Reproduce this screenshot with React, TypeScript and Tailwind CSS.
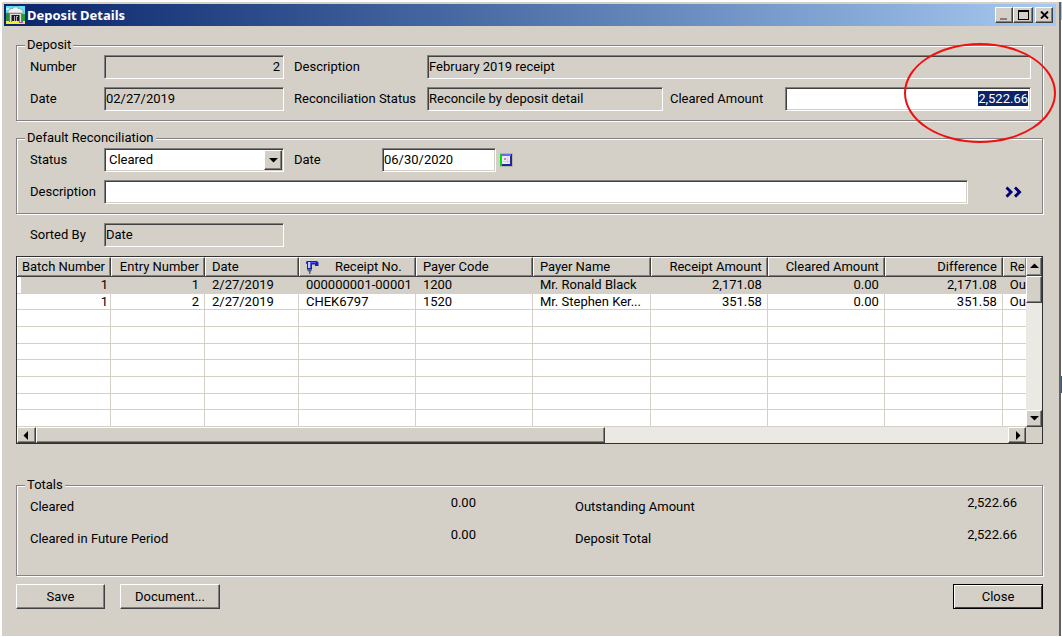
import { useEffect, useRef } from "react";
import type { InputHTMLAttributes } from "react";
import clsx from "clsx";

const sunken =
  "h-6 min-w-0 rounded-none border border-t-[#808080] border-l-[#808080] border-r-white border-b-white shadow-[inset_1px_1px_0_#404040,inset_-1px_-1px_0_#d4d0c8] leading-4 outline-none";

const raised =
  "border border-t-white border-l-white border-r-[#404040] border-b-[#404040] bg-[#d4d0c8] shadow-[inset_-1px_-1px_0_#808080]";

const groupBox =
  "min-w-0 border border-[#848284] pr-[11px] pl-[13px] pt-0.5 shadow-[1px_1px_0_#fff,inset_1px_1px_0_#fff]";

const columns = [
  { label: "Batch Number", width: "w-[94px]", right: true },
  { label: "Entry Number", width: "w-[94px]", right: true },
  { label: "Date", width: "w-[94px]", right: false },
  { label: "Receipt No.", width: "w-[117px]", right: false },
  { label: "Payer Code", width: "w-[117px]", right: false },
  { label: "Payer Name", width: "w-[118px]", right: false },
  { label: "Receipt Amount", width: "w-[117px]", right: true },
  { label: "Cleared Amount", width: "w-[117px]", right: true },
  { label: "Difference", width: "w-[118px]", right: true },
  { label: "Re", width: "w-[23px]", right: false },
];

const rows = [
  ["1", "1", "2/27/2019", "000000001-00001", "1200", "Mr. Ronald Black", "2,171.08", "0.00", "2,171.08", "Ou"],
  ["1", "2", "2/27/2019", "CHEK6797", "1520", "Mr. Stephen Ker...", "351.58", "0.00", "351.58", "Ou"],
  ...Array.from({ length: 7 }, () => Array(10).fill("")),
];

const totals = [
  { label: "Cleared", value: "0.00", label2: "Outstanding Amount", value2: "2,522.66" },
  { label: "Cleared in Future Period", value: "0.00", label2: "Deposit Total", value2: "2,522.66" },
];

function Field({ className, ...props }: InputHTMLAttributes<HTMLInputElement>) {
  return (
    <input
      type="text"
      className={clsx(sunken, "pr-[3px] pb-0.5 pl-px", props.readOnly ? "bg-[#d4d0c8]" : "bg-white", className)}
      {...props}
    />
  );
}

function Triangle({ dir }: { dir: "up" | "down" | "left" | "right" }) {
  const points = {
    up: "0,6 9,6 4.5,1.5",
    down: "0,2 9,2 4.5,6.5",
    left: "6,0 6,9 1.5,4.5",
    right: "3,0 3,9 7.5,4.5",
  };
  return (
    <svg width="9" height="9" viewBox="0 0 9 9" aria-hidden="true">
      <polygon points={points[dir]} fill="#000" />
    </svg>
  );
}

function AppIcon() {
  return (
    <svg width="19" height="18" viewBox="0 0 19 18" aria-hidden="true">
      <rect width="19" height="18" fill="#5fe3f5" />
      <rect x="0" y="7" width="4" height="8" fill="#2f8a3a" />
      <rect x="15" y="8" width="4" height="7" fill="#1fa038" />
      <rect x="0" y="2" width="3" height="2" fill="#b8f6fb" />
      <rect y="15" width="19" height="3" fill="#f6ee2a" />
      <rect x="13" y="15" width="4" height="2" fill="#c94bb0" />
      <path d="M2 7V5l3-2.500h2V1h5v1.500h2L17 5v2z" fill="#f0f0f0" stroke="#777" strokeWidth="0.5" />
      <path d="M3 7h13v9h-3V9H6v7H3z" fill="#dcdcdc" />
      <path d="M3 7h13v1H3z" fill="#8a8a8a" />
      <path d="M6 9h7v6H6z" fill="#1c1c1c" />
      <path d="M8 10h1v5H8zM10 10h2v1h-1v4h-1z" fill="#b0b0b0" />
      <path d="M3 8h1v8H3zM15 8h1v8h-1zM5 9h1v7H5zM13 9h1v7h-1z" fill="#7c7c7c" />
    </svg>
  );
}

function FinderIcon() {
  return (
    <svg width="13" height="15" viewBox="0 0 13 15" className="shrink-0" aria-hidden="true">
      <path d="M0 2l1-1h10l1.500 1.500V6H9V4.500H6V9H1V4L0 3.500z" fill="#1a22a8" />
      <path d="M2 2h2v6H2z" fill="#c3ccff" />
      <path d="M4 2h6v1H5v5H4z" fill="#4a5cf0" />
      <path d="M1 9h5v1l-1.500 2v2H3v-2L1 10z" fill="#5a5f78" />
    </svg>
  );
}

function CalendarIcon() {
  return (
    <svg width="13" height="14" viewBox="0 0 13 14" shapeRendering="crispEdges" aria-hidden="true">
      <rect width="13" height="14" fill="#b4b4b4" />
      <rect y="1" width="2" height="12" fill="#00e000" />
      <rect x="1" y="1" width="11" height="12" fill="#25259a" />
      <rect x="1" y="1" width="1" height="12" fill="#18c428" />
      <rect x="2" y="1" width="9" height="2" fill="#6a6aea" />
      <rect x="2" y="3" width="8" height="8" fill="#eeeaf6" />
      <rect x="4" y="5" width="2" height="2" fill="#e070e0" />
      <path d="M7 4h1v6H7zM3 8h7v1H3z" fill="#d3cfe2" />
    </svg>
  );
}

function TitleBar() {
  return (
    <header className="flex h-[22px] items-center bg-linear-to-r from-[#0a246a] to-[#a6caf0] pr-[3px] pl-0.5">
      <AppIcon />
      <h1 className="ml-0.5 flex-1 font-['Noto_Sans',sans-serif] text-[13px] leading-4 font-bold text-white">
        Deposit Details
      </h1>
      <button type="button" aria-label="Minimize" className={clsx(raised, "flex h-4 w-[18px] items-end pb-0.5 pl-1")}>
        <svg width="7" height="2" aria-hidden="true">
          <rect width="7" height="2" fill="#808080" />
        </svg>
      </button>
      <button type="button" aria-label="Maximize" className={clsx(raised, "flex h-4 w-5 items-center justify-center")}>
        <svg width="11" height="10" shapeRendering="crispEdges" aria-hidden="true">
          <path d="M0 0h11v10H0zM1 2v7h9V2z" fill="#000" fillRule="evenodd" />
        </svg>
      </button>
      <button type="button" aria-label="Close window" className={clsx(raised, "ml-0.5 flex h-4 w-[18px] items-center justify-center")}>
        <svg width="9" height="8" aria-hidden="true">
          <path d="M1 0.5l7 7M8 0.5l-7 7" stroke="#000" strokeWidth="1.8" />
        </svg>
      </button>
    </header>
  );
}

function DepositGroup() {
  const amount = useRef<HTMLInputElement>(null);

  useEffect(() => {
    amount.current?.focus();
    amount.current?.select();
  }, []);

  return (
    <fieldset className={clsx(groupBox, "pb-[9px]")}>
      <legend className="-ml-[5px] bg-[#d4d0c8] px-0.5 leading-4">Deposit</legend>
      <div className="flex flex-col gap-2">
        <div className="flex items-center">
          <label htmlFor="number" className="w-[74px]">Number</label>
          <Field id="number" readOnly value="2" className="w-[180px] text-right" />
          <label htmlFor="description" className="ml-2.5 w-[133px]">Description</label>
          <Field id="description" readOnly value="February 2019 receipt" className="flex-1" />
        </div>
        <div className="flex items-center">
          <label htmlFor="date" className="w-[74px]">Date</label>
          <Field id="date" readOnly value="02/27/2019" className="w-[180px]" />
          <label htmlFor="recStatus" className="ml-2.5 w-[133px]">Reconciliation Status</label>
          <Field id="recStatus" readOnly value="Reconcile by deposit detail" className="w-[236px]" />
          <label htmlFor="clearedAmount" className="ml-[7px] w-[115px]">Cleared Amount</label>
          <div className="relative flex flex-1">
            <input
              ref={amount}
              id="clearedAmount"
              type="text"
              defaultValue="2,522.66"
              className={clsx(sunken, "flex-1 bg-white pr-0.5 pb-0.5 text-right selection:bg-[#0a246a] selection:text-white")}
            />
            {/* highlight ring */}
            <div className="pointer-events-none absolute -top-11 -right-[25px] h-[100px] w-[152px] rounded-[50%] border-2 border-[#f01010]" />
          </div>
        </div>
      </div>
    </fieldset>
  );
}

function ReconciliationGroup() {
  return (
    <fieldset className={clsx(groupBox, "mt-[9px] pb-[9px]")}>
      <legend className="-ml-[5px] bg-[#d4d0c8] px-0.5 leading-4">Default Reconciliation</legend>
      <div className="flex flex-col gap-2">
        <div className="flex items-center">
          <label htmlFor="status" className="w-[74px]">Status</label>
          <div className="relative flex w-[180px]">
            <select id="status" className={clsx(sunken, "flex-1 appearance-none bg-white pl-1")}>
              <option>Cleared</option>
            </select>
            <span className={clsx(raised, "pointer-events-none absolute top-0.5 right-0.5 flex h-5 w-[18px] items-center justify-center")}>
              <Triangle dir="down" />
            </span>
          </div>
          <label htmlFor="recDate" className="ml-2.5 w-[88px]">Date</label>
          <Field id="recDate" defaultValue="06/30/2020" className="w-[114px]" />
          <button type="button" aria-label="Pick a date" className="ml-1">
            <CalendarIcon />
          </button>
        </div>
        <div className="flex items-center">
          <label htmlFor="recDescription" className="w-[74px]">Description</label>
          <Field id="recDescription" className="flex-1" />
          <button type="button" aria-label="Apply" className="flex w-[63px] justify-end pr-2">
            <svg width="18" height="12" viewBox="0 0 18 12" fill="none" aria-hidden="true">
              <path d="M2 2l4 4.500l-4 4.500M10.500 2l4.500 4.500l-4.500 4.500" stroke="#777" strokeWidth="2" />
              <path d="M1.500 1.500l4.500 4.500l-4.500 4.500M10 1.500l4.500 4.500l-4.500 4.500" stroke="#00007c" strokeWidth="2.800" />
            </svg>
          </button>
        </div>
      </div>
    </fieldset>
  );
}

function DetailGrid() {
  return (
    <div className="mt-[9px] border border-[#303030] bg-white">
      <div className="flex">
        <table className="h-[170px] min-w-0 flex-1 table-fixed border-separate border-spacing-0">
          <thead>
            <tr className="h-5">
              {columns.map((col) => (
                <th
                  key={col.label}
                  scope="col"
                  className={clsx(
                    col.width,
                    col.right ? "pr-[5px] text-right" : "pl-[7px] text-left",
                    "overflow-hidden border-t border-r border-b border-t-white border-r-[#404040] border-b-[#404040] bg-[#d4d0c8] py-0 leading-4 font-normal whitespace-nowrap shadow-[inset_1px_0_0_#fff,inset_-1px_-1px_0_#808080] last:border-r-0",
                  )}
                >
                  {col.label === "Receipt No." ? (
                    <span className="flex items-center gap-4">
                      <FinderIcon />
                      {col.label}
                    </span>
                  ) : (
                    col.label
                  )}
                </th>
              ))}
            </tr>
          </thead>
          <tbody>
            {rows.map((row, r) => (
              <tr key={r} className={clsx("h-4", r === 0 && "bg-[#d4d0c8]")}>
                {row.map((cell, c) => (
                  <td
                    key={c}
                    className={clsx(
                      "overflow-hidden border-r border-b border-[#d4d0c8] py-0 leading-[15px] whitespace-nowrap last:border-r-0",
                      columns[c].right ? "text-right" : "pl-[7px]",
                      columns[c].right && (c === 0 ? "pr-0.5" : "pr-[5px]"),
                      r === 0 && c === 0 && "shadow-[inset_4px_0_0_#fff]",
                    )}
                  >
                    {cell}
                  </td>
                ))}
              </tr>
            ))}
          </tbody>
        </table>
        <div className="flex w-4 flex-col bg-[#ebe9e4]">
          <button type="button" aria-label="Scroll up" className={clsx(raised, "flex h-[19px] items-center justify-center")}>
            <Triangle dir="up" />
          </button>
          <div className={clsx(raised, "h-[27px]")} />
          <button type="button" aria-label="Scroll down" className={clsx(raised, "mt-auto flex h-[17px] items-center justify-center")}>
            <Triangle dir="down" />
          </button>
        </div>
      </div>
      <div className="flex h-4 bg-[#ebe9e4]">
        <button type="button" aria-label="Scroll left" className={clsx(raised, "flex w-[19px] items-center justify-center")}>
          <Triangle dir="left" />
        </button>
        <div className={clsx(raised, "w-5/9")} />
        <button type="button" aria-label="Scroll right" className={clsx(raised, "ml-auto flex w-[18px] items-center justify-center")}>
          <Triangle dir="right" />
        </button>
        <div className="w-4 bg-[#d4d0c8]" />
      </div>
    </div>
  );
}

function TotalsGroup() {
  return (
    <fieldset className={clsx(groupBox, "mt-[33px] pb-6")}>
      <legend className="-ml-[5px] bg-[#d4d0c8] px-0.5 leading-4">Totals</legend>
      <div className="flex flex-col gap-2 pr-3.5">
        {totals.map((t) => (
          <div key={t.label} className="flex h-6 items-center">
            <span className="w-[346px]">{t.label}</span>
            <span className="w-[100px] self-start text-right">{t.value}</span>
            <span className="ml-[99px] flex-1">{t.label2}</span>
            <span className="self-start text-right">{t.value2}</span>
          </div>
        ))}
      </div>
    </fieldset>
  );
}

export default function App() {
  return (
    <div className="flex min-h-screen bg-white pt-0.5 pb-px pl-0.5 font-[Roboto,'Liberation_Sans',sans-serif] text-[13px] leading-4 text-black">
      <div className="min-w-0 flex-1 border-r-2 border-[#606060] bg-[#d4d0c8] pt-0.5 pl-0.5">
        <div className="pr-[3px]">
          <TitleBar />
        </div>
        <main className="pt-[11px] pr-4 pl-3">
          <DepositGroup />
          <ReconciliationGroup />
          <div className="mt-[9px] flex items-center pl-3.5">
            <label htmlFor="sortedBy" className="w-[74px]">Sorted By</label>
            <Field id="sortedBy" readOnly value="Date" className="w-[180px]" />
          </div>
          <DetailGrid />
          <TotalsGroup />
          <div className="mt-2 flex gap-[15px]">
            <button type="button" className={clsx(raised, "h-[25px] w-[89px]")}>Save</button>
            <button type="button" className={clsx(raised, "h-[25px] w-[100px]")}>Document...</button>
            <button
              type="button"
              className="ml-auto h-[25px] w-[90px] border border-black bg-[#d4d0c8] shadow-[inset_1px_1px_0_#fff,inset_-1px_-1px_0_#404040]"
            >
              Close
            </button>
          </div>
        </main>
      </div>
      {/* sliver of the window behind */}
      <div className="flex w-px flex-col">
        <div className="h-[18px] bg-[#a6caf0]" />
        <div className="mt-[356px] h-[17px] bg-[#3c5a92]" />
      </div>
    </div>
  );
}
